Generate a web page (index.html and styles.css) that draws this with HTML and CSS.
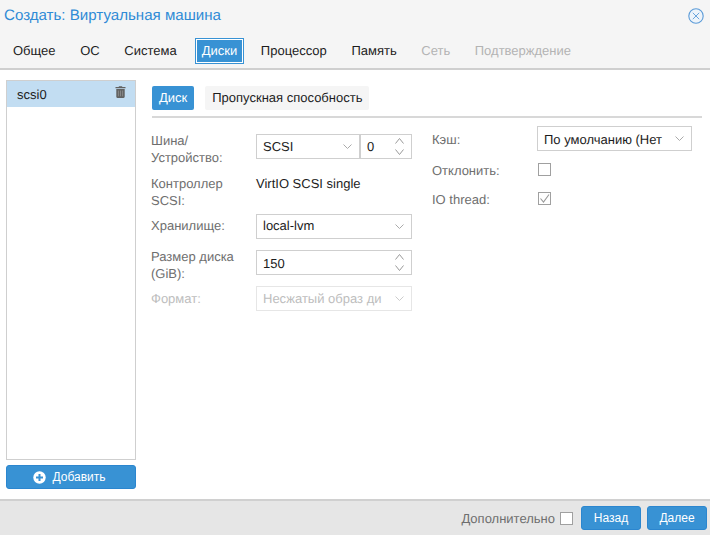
FILE: index.html
```html
<!doctype html>
<html>
<head>
  <title>Создать: Виртуальная машина</title>
  <link rel="stylesheet" href="styles.css">
</head>
<body>

  <div class="dialog">

    <header class="title-bar">
      <span class="title">Создать: Виртуальная машина</span>
      <svg class="close" width="16" height="16" viewBox="0 0 16 16">
        <circle cx="8" cy="8" r="7.2" fill="#eef4fa" stroke="#5b9bd8" stroke-width="1.1"/>
        <path d="M4.8 4.8 11.2 11.2M11.2 4.8 4.8 11.2" stroke="#5b9bd8" stroke-width="0.9" fill="none"/>
      </svg>
    </header>

    <nav class="wizard-tabs">
      <span class="wtab">Общее</span>
      <span class="wtab">ОС</span>
      <span class="wtab">Система</span>
      <span class="wtab active">Диски</span>
      <span class="wtab">Процессор</span>
      <span class="wtab">Память</span>
      <span class="wtab off">Сеть</span>
      <span class="wtab off">Подтверждение</span>
    </nav>

    <main class="content">

      <aside class="side">
        <div class="disk-list">
          <div class="disk-item">
            <span>scsi0</span>
            <svg class="trash" width="11" height="12" viewBox="0 0 11 12">
              <path d="M3.800 1V.3h3.400V1h3.300v1.300H.5V1z" fill="#626262"/>
              <path d="M1.300 3h8.400v7.800c0 .8-.5 1.100-1.100 1.100H2.400c-.6 0-1.100-.3-1.100-1.100z" fill="#626262"/>
              <path d="M3.400 4.500v5.800M5.500 4.500v5.800M7.600 4.500v5.800" stroke="#a3a3a3" stroke-width=".6"/>
            </svg>
          </div>
        </div>
        <button class="add-btn">
          <svg width="13" height="13" viewBox="0 0 13 13">
            <circle cx="6.5" cy="6.5" r="6.2" fill="#fff"/>
            <path d="M6.5 3v7M3 6.5h7" stroke="#3892d4" stroke-width="2"/>
          </svg>
          Добавить
        </button>
      </aside>

      <section class="editor">
        <div class="sub-tabs">
          <span class="stab active">Диск</span>
          <span class="stab">Пропускная способность</span>
        </div>

        <div class="columns">
          <div class="col-left">
            <div class="row row-bus">
              <label>Шина/<br>Устройство:</label>
              <div class="pair">
                <div class="field bus-type">
                  <span class="value">SCSI</span>
                  <svg class="chev" width="9" height="5" viewBox="0 0 9 5"><path d="M.5.5 4.500 4.500 8.500.5" fill="none" stroke="#aaa"/></svg>
                </div>
                <div class="field bus-num">
                  <span class="value">0</span>
                  <svg class="spin" width="9" height="17" viewBox="0 0 9 17"><path d="M.5 5.500 4.500.5 8.500 5.500M.5 11.500 4.500 16.500 8.500 11.500" fill="none" stroke="#999"/></svg>
                </div>
              </div>
            </div>
            <div class="row row-ctrl">
              <label>Контроллер<br>SCSI:</label>
              <span class="plain">VirtIO SCSI single</span>
            </div>
            <div class="row row-single">
              <label>Хранилище:</label>
              <div class="field">
                <span class="value">local-lvm</span>
                <svg class="chev" width="9" height="5" viewBox="0 0 9 5"><path d="M.5.5 4.500 4.500 8.500.5" fill="none" stroke="#aaa"/></svg>
              </div>
            </div>
            <div class="row row-size">
              <label>Размер диска<br>(GiB):</label>
              <div class="field">
                <span class="value">150</span>
                <svg class="spin" width="9" height="17" viewBox="0 0 9 17"><path d="M.5 5.500 4.500.5 8.500 5.500M.5 11.500 4.500 16.500 8.500 11.500" fill="none" stroke="#999"/></svg>
              </div>
            </div>
            <div class="row row-single disabled">
              <label>Формат:</label>
              <div class="field">
                <span class="value">Несжатый образ ди</span>
                <svg class="chev" width="9" height="5" viewBox="0 0 9 5"><path d="M.5.5 4.500 4.500 8.500.5" fill="none" stroke="#ccc"/></svg>
              </div>
            </div>
          </div>

          <div class="col-right">
            <div class="row row-single">
              <label>Кэш:</label>
              <div class="field">
                <span class="value">По умолчанию (Нет</span>
                <svg class="chev" width="9" height="5" viewBox="0 0 9 5"><path d="M.5.5 4.500 4.500 8.500.5" fill="none" stroke="#aaa"/></svg>
              </div>
            </div>
            <div class="row row-check">
              <label>Отклонить:</label>
              <span class="check"></span>
            </div>
            <div class="row row-check">
              <label>IO thread:</label>
              <span class="check">
                <svg width="11" height="11" viewBox="0 0 11 11"><path d="M1.500 5.500 4.500 9 10 1.500" fill="none" stroke="#999" stroke-width="1.100"/></svg>
              </span>
            </div>
          </div>
        </div>
      </section>

    </main>

    <footer class="footer">
      <span class="advanced">Дополнительно</span>
      <span class="check footer-check"></span>
      <button class="btn">Назад</button>
      <button class="btn">Далее</button>
    </footer>

  </div>

</body>
</html>
```

FILE: styles.css
```css
* {
  box-sizing: border-box;
}

html, body {
  margin: 0;
  height: 100%;
}

body {
  font-family: "Liberation Sans", Arial, sans-serif;
  font-size: 13px;
  color: #1c1c1c;
  text-rendering: geometricPrecision;
  overflow: hidden;
}

.dialog {
  display: flex;
  flex-direction: column;
  width: 710px;
  height: 535px;
  background: #fff;
}

/* title */

.title-bar {
  display: flex;
  justify-content: space-between;
  align-items: center;
  height: 31px;
  padding: 0 6px 0 4px;
  background: #f5f5f5;
}

.title {
  font-size: 15.1px;
  color: #2f8bd6;
}

/* wizard tabs */

.wizard-tabs {
  display: flex;
  gap: 10.6px;
  height: 39px;
  padding: 8px 0 0 6px;
  background: #f5f5f5;
  border-bottom: 2px solid #cfcfcf;
}

.wtab {
  height: 24px;
  line-height: 24px;
  padding: 0 7px;
}

.wtab.active {
  margin-left: 1.5px;
  padding: 0 5px;
  line-height: 22px;
  color: #fff;
  background: #3892d4;
  border: 1px solid #fff;
  outline: 1px solid #3892d4;
}

.wtab.off {
  color: #b3b3b3;
}

/* main */

.content {
  flex: 1;
  display: flex;
  min-height: 0;
}

.side {
  display: flex;
  flex-direction: column;
  gap: 5px;
  width: 130px;
  margin: 10px 0 10px 6px;
}

.disk-list {
  flex: 1;
  border: 1px solid #cfcfcf;
}

.disk-item {
  display: flex;
  justify-content: space-between;
  align-items: center;
  height: 26px;
  padding: 1px 9px 0 10px;
  background: #c2ddf2;
}

.trash {
  margin-top: -6px;
}

.add-btn {
  display: flex;
  justify-content: center;
  align-items: center;
  gap: 6px;
  height: 24px;
  padding: 0 3px 0 0;
  font: inherit;
  font-size: 12px;
  color: #fff;
  background: #3892d4;
  border: 1px solid #2b86cf;
  border-radius: 3px;
}

.editor {
  flex: 1;
  padding: 16px 8px 0 16px;
  min-width: 0;
}

.sub-tabs {
  display: flex;
  gap: 11px;
  padding-bottom: 6px;
  border-bottom: 2px solid #d8d8d8;
}

.stab {
  height: 24px;
  line-height: 24px;
  padding: 0 7px;
  background: #f5f5f5;
  border-radius: 2px;
}

.stab.active {
  color: #fff;
  background: #3892d4;
}

/* form */

.columns {
  display: flex;
}

.col-left {
  width: 280px;
  padding-top: 14px;
}

.col-right {
  flex: 1;
  padding-top: 8px;
}

.row {
  display: flex;
}

.row label {
  flex: none;
  width: 105px;
  line-height: 17px;
  color: #6e6e6e;
}

.col-left .row label {
  margin-left: -1px;
}

.col-right .field {
  width: 155px;
}

.field {
  flex: none;
  display: flex;
  align-items: center;
  gap: 12px;
  width: 156px;
  height: 25px;
  padding: 0 7px 0 6px;
  background: #fff;
  border: 1px solid #cfcfcf;
  overflow: hidden;
  white-space: nowrap;
}

.value {
  flex: 1;
  min-width: 0;
}

.chev, .spin {
  flex: none;
}

.pair {
  display: flex;
}

.bus-type {
  width: 104px;
}

.bus-num {
  width: 52px;
}

.row-bus {
  height: 34px;
}

.row-bus .pair {
  margin-top: 2px;
}

.row-ctrl {
  height: 34px;
  margin-top: 9px;
}

.plain {
  line-height: 17px;
}

.row-single {
  align-items: center;
  height: 25px;
  margin-bottom: 11px;
}

.row-ctrl + .row-single {
  margin-top: 5px;
}

.row-ctrl + .row-single label,
.row-ctrl + .row-single .value {
  padding-bottom: 2px;
}

.row-size {
  height: 25px;
  margin-bottom: 11px;
}

.row-size label {
  margin-top: -2px;
}

.row-size .value,
.col-right .row-single .value,
.col-right .row-single label {
  padding-top: 2px;
}

.disabled label {
  color: #bdbdbd;
}

.disabled .field {
  color: #bdbdbd;
  border-color: #e6e6e6;
}

.row-check {
  align-items: center;
  height: 18px;
  margin-bottom: 11px;
}

.col-right .row-single {
  margin-bottom: 10px;
}

.row-check .check {
  margin: -2px 0 0 1px;
}

.check {
  flex: none;
  display: flex;
  align-items: center;
  justify-content: center;
  width: 13px;
  height: 13px;
  background: #fff;
  border: 1px solid #a0a0a0;
}

/* footer */

.footer {
  display: flex;
  justify-content: flex-end;
  align-items: center;
  height: 36px;
  padding: 0 3px 0 0;
  gap: 6px;
  background: #e6e6e6;
  border-top: 2px solid #d0d0d0;
}

.advanced {
  margin-right: -1px;
  color: #6e6e6e;
}

.footer-check {
  margin-right: 2px;
}

.btn {
  width: 60px;
  height: 24px;
  padding: 0;
  font: inherit;
  font-size: 12px;
  color: #fff;
  background: #3892d4;
  border: 1px solid #2b86cf;
  border-radius: 3px;
}
```
